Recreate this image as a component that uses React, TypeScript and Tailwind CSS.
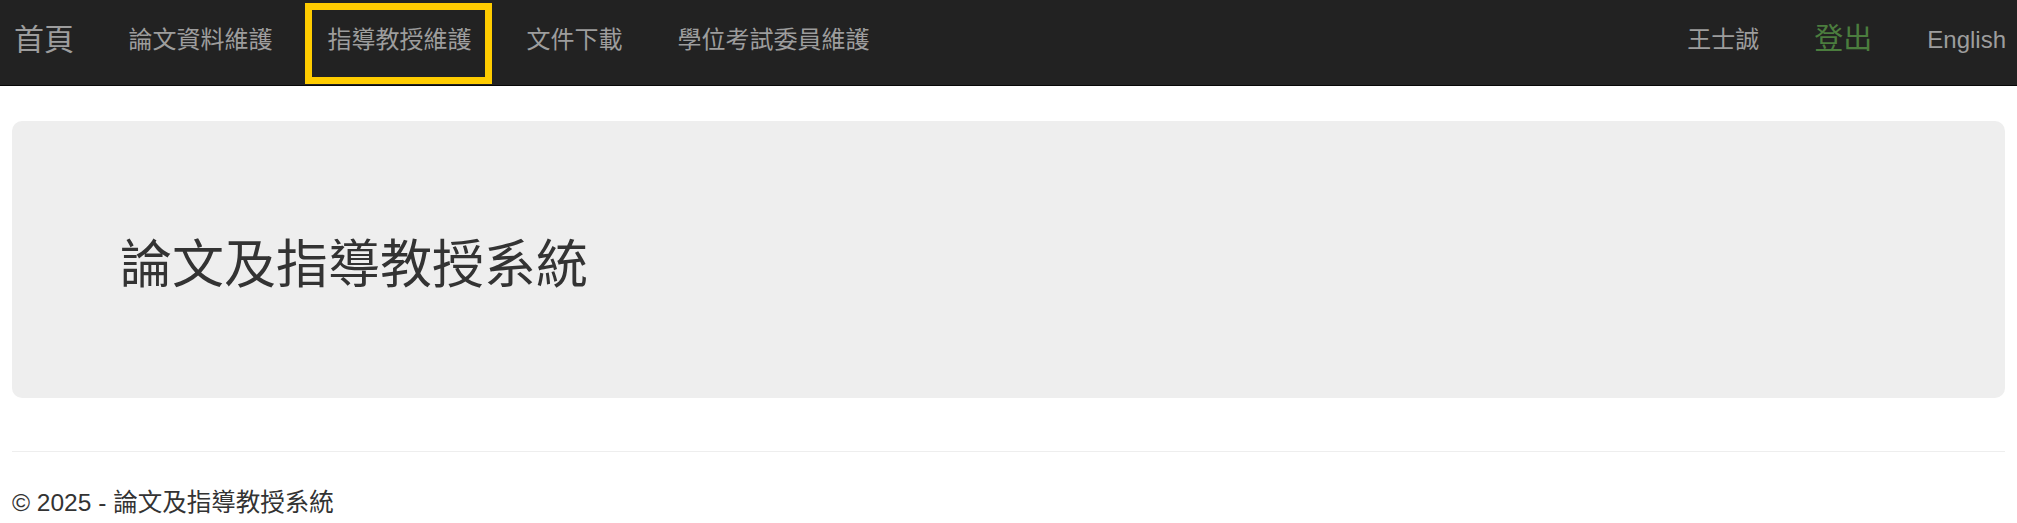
const links = ['論文資料維護', '指導教授維護', '文件下載', '學位考試委員維護'];

function NavBar() {
  return (
    <nav className="h-[86px] bg-[#222222] border-b border-[#080808] flex items-center pb-[6px]">
      <a className="pl-[14px] mr-[27px] text-[30px] leading-none text-[#9d9d9d]">首頁</a>
      <ul className="flex items-center">
        {links.map((label, i) => (
          <li key={label} className="relative">
            <a className="block px-[27.5px] text-[24px] leading-none text-[#9d9d9d]">{label}</a>
            {i === 1 && (
              <span className="absolute left-[5px] right-[7px] top-[-25px] bottom-[-32px] border-[7px] border-[#ffcc00] pointer-events-none" />
            )}
          </li>
        ))}
      </ul>
      <ul className="ml-auto flex items-center pr-[11px]">
        <li>
          <a className="block px-[27.5px] text-[24px] leading-none text-[#9d9d9d]">王士誠</a>
        </li>
        <li>
          <a className="block px-[27.5px] text-[29px] leading-none text-[#4b7d3e]">登出</a>
        </li>
        <li>
          <a className="block pl-[27.5px] text-[24px] leading-none text-[#9d9d9d]">English</a>
        </li>
      </ul>
    </nav>
  );
}

export default function App() {
  return (
    <div className="min-h-[523px] bg-white font-['Liberation_Sans','Noto_Sans_CJK_TC',sans-serif] text-[#333333]">
      <NavBar />
      <div className="px-[12px]">
        <div className="mt-[35px] h-[277px] rounded-[10px] bg-[#eeeeee] flex items-center pl-[108px] pt-[10px]">
          <h1 className="text-[52px] leading-none font-normal text-[#333333]">論文及指導教授系統</h1>
        </div>
        <hr className="mt-[53px] border-t border-[#eeeeee]" />
        <footer className="mt-[34px]">
          <p className="text-[24.5px] leading-[34px]">© 2025 - 論文及指導教授系統</p>
        </footer>
      </div>
    </div>
  );
}
